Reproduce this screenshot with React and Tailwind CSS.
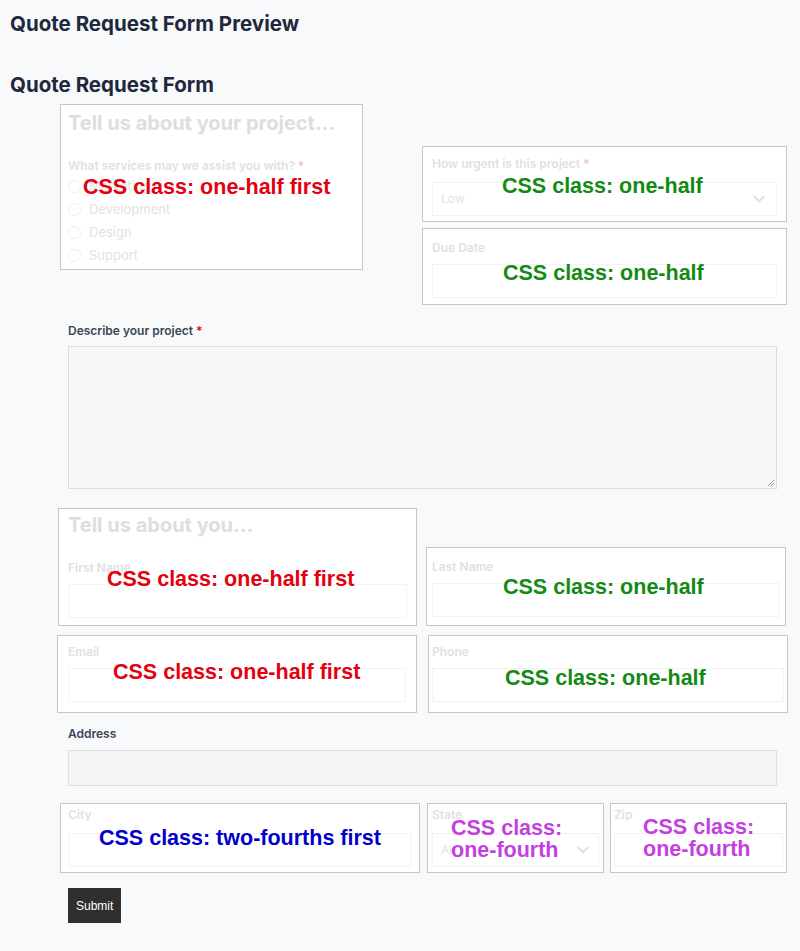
import React from "react";

const overlayFont = { fontFamily: '"Liberation Sans", Arial, sans-serif' };

function Note({ text, color, lead = "leading-[24px]", className = "" }) {
  return (
    <div
      className={`absolute pointer-events-none font-bold text-[21.5px] ${lead} ${color} ${className}`}
      style={overlayFont}
    >
      {text}
    </div>
  );
}

function Box({ className = "", children }) {
  return (
    <div className={`relative bg-white border border-[#c4c6c9] ${className}`}>{children}</div>
  );
}

function FadedLabel({ children }) {
  return <div className="text-[12px] font-semibold leading-[16px] text-[#dfe1e4]">{children}</div>;
}

function FadedInput({ className = "" }) {
  return <div className={`h-[34px] border border-[#f3f3f3] bg-white ${className}`}></div>;
}

function Chevron() {
  return (
    <svg width="18" height="18" viewBox="0 0 24 24" fill="none" stroke="#e2e2e2" strokeWidth="3" strokeLinecap="round" strokeLinejoin="round">
      <path d="M6 9l6 6 6-6" />
    </svg>
  );
}

export default function App() {
  const services = ["Marketing", "Development", "Design", "Support"];

  return (
    <div className="min-h-[951px] bg-[#f8f9fb] text-[#1f2a37]" style={{ fontFamily: 'Inter, "Noto Sans", sans-serif' }}>
      <h1 className="pl-[10px] pt-[11px] text-[20.5px] font-bold leading-[26px] text-[#1e293b]">Quote Request Form Preview</h1>
      <h2 className="pl-[10px] mt-[35px] text-[20.5px] font-bold leading-[26px] text-[#1e293b]">Quote Request Form</h2>

      {/* row 1 */}
      <div className="flex items-start mt-[6px]">
        <Box className="ml-[60px] w-[303px] h-[166px] px-[7px] pt-[5px]">
          <div className="text-[20px] font-bold leading-[26px] text-[#dcdee1]">Tell us about your project...</div>
          <div className="mt-[22px]">
            <FadedLabel>
              What services may we assist you with? <span className="text-[#f3c2c2]">*</span>
            </FadedLabel>
          </div>
          <div className="mt-[1px] flex flex-col">
            {services.map((s) => (
              <div key={s} className="flex items-center gap-[8px] h-[23px]">
                <span className="w-[13px] h-[13px] rounded-full border border-[#eceef0]"></span>
                <span className="text-[13px] text-[#e1e3e6]">{s}</span>
              </div>
            ))}
          </div>
          <Note text="CSS class: one-half first" color="text-[#e3000f]" className="left-[22px] top-[70px]" />
        </Box>

        <div className="ml-[59px] mt-[42px] w-[365px] flex flex-col gap-[6px]">
          <Box className="h-[76px] px-[9px] pt-[9px]">
            <FadedLabel>
              How urgent is this project <span className="text-[#f3c2c2]">*</span>
            </FadedLabel>
            <div className="mt-[10px] h-[34px] border border-[#f3f3f3] flex items-center justify-between pl-[8px] pr-[8px]">
              <span className="text-[12px] text-[#e1e3e6]">Low</span>
              <Chevron />
            </div>
            <Note text="CSS class: one-half" color="text-[#148a14]" className="left-[79px] top-[27px]" />
          </Box>
          <Box className="h-[77px] px-[9px] pt-[11px]">
            <FadedLabel>Due Date</FadedLabel>
            <FadedInput className="mt-[8px]" />
            <Note text="CSS class: one-half" color="text-[#148a14]" className="left-[80px] top-[32px]" />
          </Box>
        </div>
      </div>

      {/* describe */}
      <div className="pl-[68px] pr-[23px] mt-[18px]">
        <div className="text-[12px] font-semibold leading-[16px] text-[#3a4656]">
          Describe your project <span className="text-[#e3000f]">*</span>
        </div>
        <div className="relative mt-[7px] h-[143px] bg-[#f7f7f7] border border-[#dcdcdc]">
          <svg className="absolute right-[1px] bottom-[1px]" width="8" height="8" viewBox="0 0 8 8" stroke="#9a9a9a" strokeWidth="1">
            <path d="M7 1L1 7M7 4L4 7" />
          </svg>
        </div>
      </div>

      {/* row 2 */}
      <div className="flex items-end mt-[19px]">
        <Box className="ml-[58px] w-[359px] h-[118px] px-[9px] pt-[3px]">
          <div className="text-[20px] font-bold leading-[26px] text-[#dcdee1]">Tell us about you...</div>
          <div className="mt-[22px]">
            <FadedLabel>First Name</FadedLabel>
          </div>
          <FadedInput className="mt-[8px]" />
          <Note text="CSS class: one-half first" color="text-[#e3000f]" className="left-[48px] top-[58px]" />
        </Box>
        <Box className="ml-[9px] w-[360px] h-[79px] px-[5px] pt-[11px]">
          <FadedLabel>Last Name</FadedLabel>
          <FadedInput className="mt-[8px]" />
          <Note text="CSS class: one-half" color="text-[#148a14]" className="left-[76px] top-[27px]" />
        </Box>
      </div>

      {/* row 3 */}
      <div className="flex items-start mt-[9px]">
        <Box className="ml-[57px] w-[360px] h-[78px] px-[10px] pt-[8px]">
          <FadedLabel>Email</FadedLabel>
          <FadedInput className="mt-[8px]" />
          <Note text="CSS class: one-half first" color="text-[#e3000f]" className="left-[55px] top-[24px]" />
        </Box>
        <Box className="ml-[11px] w-[360px] h-[78px] px-[3px] pt-[8px]">
          <FadedLabel>Phone</FadedLabel>
          <FadedInput className="mt-[8px]" />
          <Note text="CSS class: one-half" color="text-[#148a14]" className="left-[76px] top-[30px]" />
        </Box>
      </div>

      {/* address */}
      <div className="pl-[68px] pr-[23px] mt-[13px]">
        <div className="text-[12px] font-semibold leading-[16px] text-[#3a4656]">Address</div>
        <div className="mt-[8px] h-[36px] bg-[#f5f5f5] border border-[#dedede]"></div>
      </div>

      {/* row 4 */}
      <div className="flex items-start mt-[17px]">
        <Box className="ml-[60px] w-[360px] h-[70px] px-[7px] pt-[3px]">
          <FadedLabel>City</FadedLabel>
          <FadedInput className="mt-[10px]" />
          <Note text="CSS class: two-fourths first" color="text-[#0000cc]" className="left-[38px] top-[22px]" />
        </Box>
        <Box className="ml-[7px] w-[177px] h-[70px] px-[4px] pt-[3px]">
          <FadedLabel>State</FadedLabel>
          <div className="mt-[10px] h-[34px] border border-[#f3f3f3] flex items-center justify-between pl-[8px] pr-[6px]">
            <span className="text-[12px] text-[#e1e3e6]">Al</span>
            <Chevron />
          </div>
          <Note text={<>CSS class:<br />one-fourth</>} color="text-[#c43fe0]" lead="leading-[22px]" className="left-[23px] top-[13px]" />
        </Box>
        <Box className="ml-[6px] w-[177px] h-[70px] px-[3px] pt-[3px]">
          <FadedLabel>Zip</FadedLabel>
          <FadedInput className="mt-[10px]" />
          <Note text={<>CSS class:<br />one-fourth</>} color="text-[#c43fe0]" lead="leading-[22px]" className="left-[32px] top-[12px]" />
        </Box>
      </div>

      <div className="pl-[68px] mt-[15px] pb-[28px]">
        <button
          type="button"
          className="h-[35px] px-[8px] bg-[#2f2f2f] text-white text-[12px]"
          style={overlayFont}
        >
          Submit
        </button>
      </div>
    </div>
  );
}
